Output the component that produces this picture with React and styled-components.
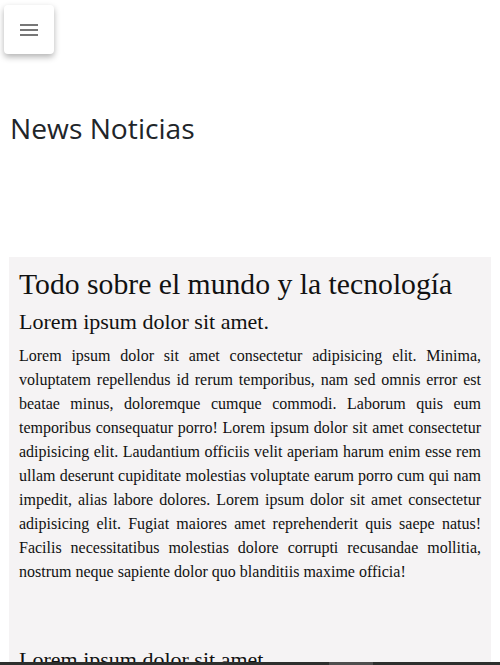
import React from 'react';
import styled, { createGlobalStyle } from 'styled-components';

const GlobalStyle = createGlobalStyle`
  body {
    margin: 0;
    background: #fff;
    color: #212529;
    font-family: "Open Sans", "Liberation Sans", sans-serif;
  }
`;

const Page = styled.div`
  display: flex;
  flex-direction: column;
  padding: 0 9px;
`;

const Header = styled.header`
  display: flex;
  align-items: center;
  padding: 5px 0 0 0;
  margin-left: -5px;
`;

const MenuButton = styled.button`
  width: 50px;
  height: 49px;
  border: none;
  border-radius: 4px;
  background: #fff;
  box-shadow: 0 3px 6px rgba(0, 0, 0, 0.3);
  display: flex;
  flex-direction: column;
  justify-content: center;
  align-items: center;
  gap: 3px;
  padding: 0;
`;

const Bar = styled.span`
  display: block;
  width: 18px;
  height: 2px;
  background: #777;
`;

const Title = styled.h1`
  font-size: 28.2px;
  font-weight: 400;
  margin: 58px 0 0 1px;
  line-height: 1.2;
`;

const Panel = styled.section`
  margin-top: 111px;
  background: #f5f3f4;
  padding: 10px 10px 0;
  font-family: "Liberation Serif", serif;
  color: #111;
`;

const Heading = styled.h2`
  font-size: 29.7px;
  font-weight: 400;
  margin: 0;
  line-height: 1.2;
`;

const Subtitle = styled.h3`
  font-size: 22px;
  font-weight: 400;
  margin: 7px 0 8px;
  line-height: 1.2;
`;

const Paragraph = styled.p`
  font-size: 16px;
  line-height: 24px;
  text-align: justify;
  margin: 0 0 ${({ gap }) => gap || 0}px;
`;

const BottomBar = styled.div`
  position: fixed;
  left: 0;
  right: 0;
  bottom: 0;
  height: 3px;
  background: #2d2f2d;
  display: flex;
`;

const Thumb = styled.span`
  margin-left: 329px;
  width: 44px;
  background: #4e4e4e;
`;

const text =
  'Lorem ipsum dolor sit amet consectetur adipisicing elit. Minima, voluptatem repellendus id rerum temporibus, nam sed omnis error est beatae minus, doloremque cumque commodi. Laborum quis eum temporibus consequatur porro! Lorem ipsum dolor sit amet consectetur adipisicing elit. Laudantium officiis velit aperiam harum enim esse rem ullam deserunt cupiditate molestias voluptate earum porro cum qui nam impedit, alias labore dolores. Lorem ipsum dolor sit amet consectetur adipisicing elit. Fugiat maiores amet reprehenderit quis saepe natus! Facilis necessitatibus molestias dolore corrupti recusandae mollitia, nostrum neque sapiente dolor quo blanditiis maxime officia!';

export default function App() {
  return (
    <>
      <GlobalStyle />
      <Page>
        <Header>
          <MenuButton aria-label="menu">
            <Bar />
            <Bar />
            <Bar />
          </MenuButton>
        </Header>
        <Title>News Noticias</Title>
        <Panel>
          <Heading>Todo sobre el mundo y la tecnología</Heading>
          <Subtitle>Lorem ipsum dolor sit amet.</Subtitle>
          <Paragraph gap={63}>{text}</Paragraph>
          <Subtitle>Lorem ipsum dolor sit amet.</Subtitle>
          <Paragraph>{text}</Paragraph>
        </Panel>
      </Page>
      <BottomBar>
        <Thumb />
      </BottomBar>
    </>
  );
}
